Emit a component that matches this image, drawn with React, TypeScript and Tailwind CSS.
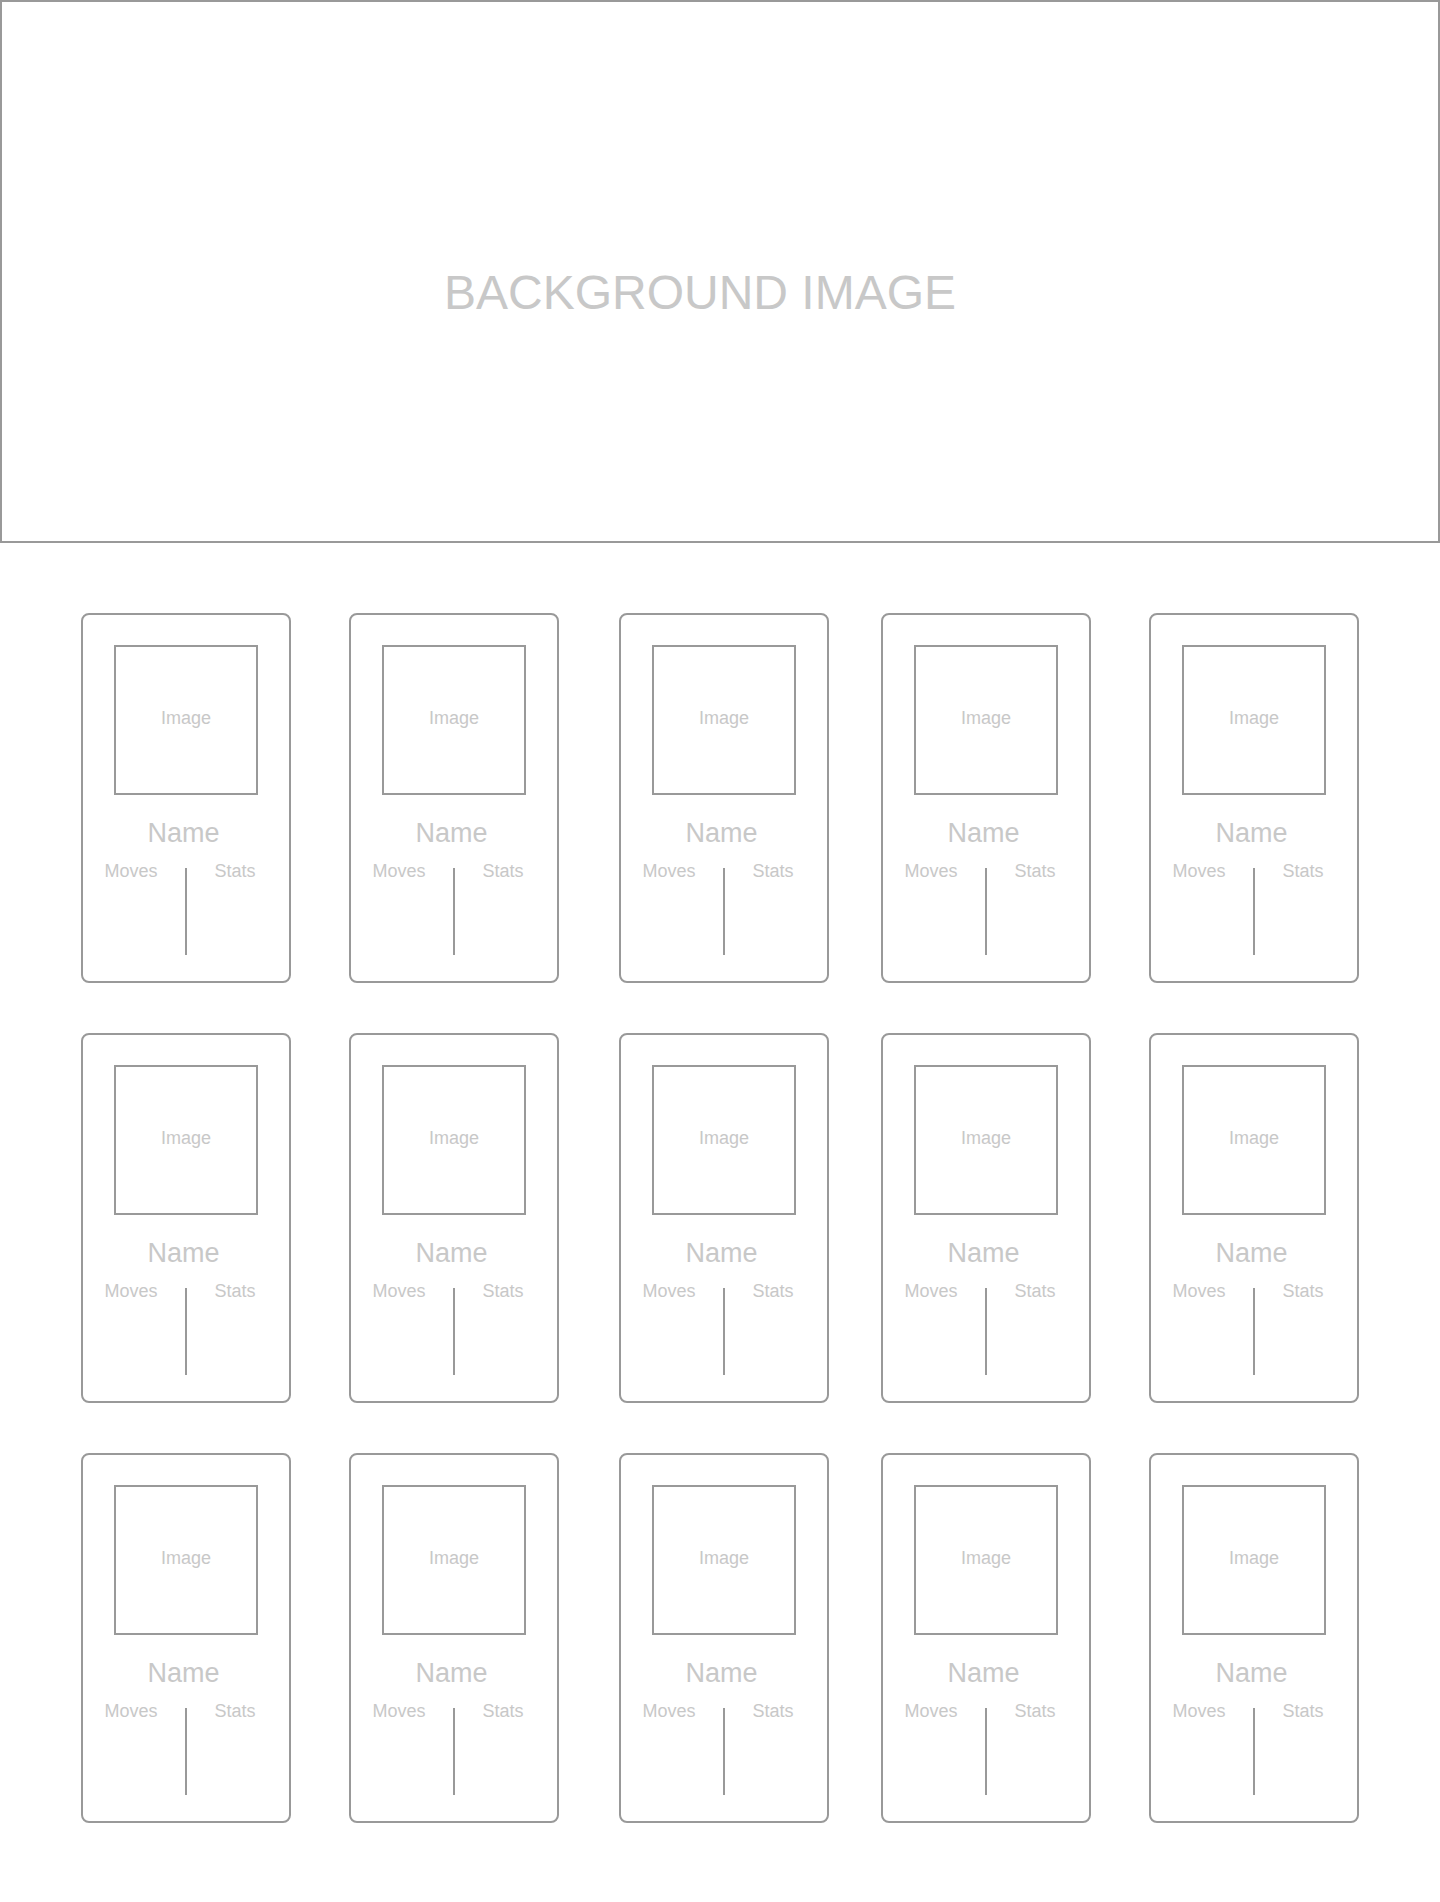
import React from "react";

const cards = Array.from({ length: 15 }, (_, i) => i);

// one pokemon-ish placeholder card
const Card = () => {
  return (
    <div className="w-[210px] h-[370px] border-2 border-[#999] rounded-lg flex flex-col items-center pt-[30px]">
      <div className="w-[144px] h-[150px] border-2 border-[#999] flex items-center justify-center pb-[4px] text-[18px] leading-[21px] text-[#c8c8c8]">
        Image
      </div>
      <p className="mt-[23px] pr-[5px] text-[27px] leading-[31px] text-[#c8c8c8]">
        Name
      </p>
      <div className="mt-[12px] flex w-full">
        <div className="flex-1 pr-[6px] text-center text-[18px] leading-[21px] text-[#c8c8c8]">
          Moves
        </div>
        <div className="mt-[7px] w-[2px] h-[87px] bg-[#999]" />
        <div className="flex-1 pr-[6px] text-center text-[18px] leading-[21px] text-[#c8c8c8]">
          Stats
        </div>
      </div>
    </div>
  );
};

const App = () => {
  return (
    <div className="w-[1440px] min-h-[1902px] bg-white font-['Liberation_Sans',Arial,sans-serif]">
      {/* Hero */}
      <div className="h-[543px] border-2 border-[#999] flex items-center justify-center pt-[42px] pr-[40px]">
        <h1 className="text-[48px] leading-[55px] text-[#c8c8c8]">BACKGROUND IMAGE</h1>
      </div>

      {/* Card grid */}
      <div className="mt-[70px] pb-[80px] pl-[81px] grid grid-cols-[268px_270px_262px_268px_210px] gap-y-[50px]">
        {cards.map((i) => (
          <Card key={i} />
        ))}
      </div>
    </div>
  );
};

export default App;
